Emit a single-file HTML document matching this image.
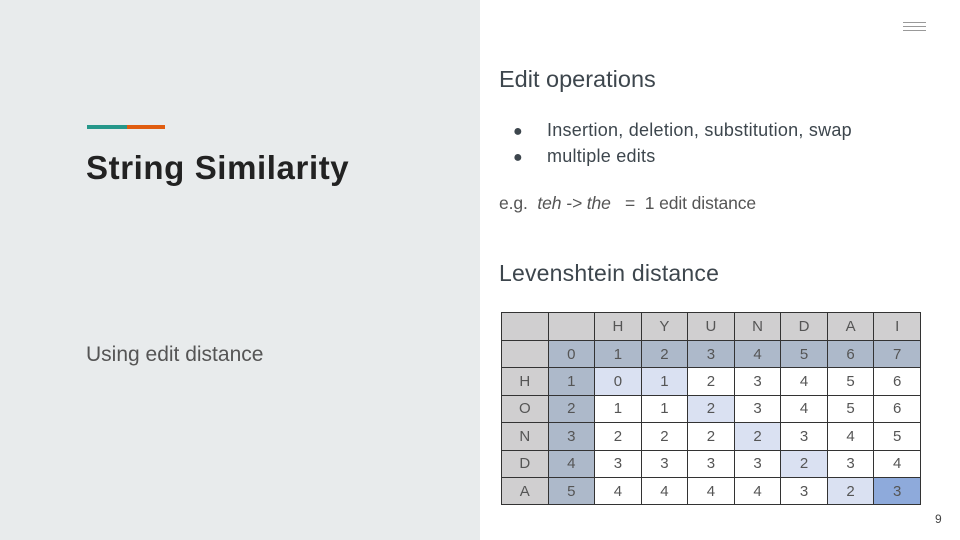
<!DOCTYPE html>
<html><head><meta charset="utf-8"><style>
body{margin:0;width:960px;height:540px;position:relative;overflow:hidden;background:#fff;font-family:"Liberation Sans",sans-serif;}
.l{position:absolute;left:0;top:0;width:480px;height:540px;background:#e8ebec;}
.t{position:absolute;white-space:nowrap;}
table{position:absolute;left:501px;top:312px;border-collapse:collapse;font-size:15px;color:#555;table-layout:fixed;width:420px;}
td{border:1px solid #333;height:26.4px;text-align:center;padding:0;}
.g{background:#d0cfd0}.b{background:#adb9ca}.lb{background:#dae1f2}.d{background:#8eaadb}
</style></head><body>
<div class="l"></div>
<div style="position:absolute;left:87px;top:125px;width:40px;height:4px;background:#25978a"></div>
<div style="position:absolute;left:127px;top:125px;width:38px;height:4px;background:#e05d10"></div>
<div class="t" style="left:86px;top:149px;font-size:33px;font-weight:bold;color:#222;letter-spacing:0.6px">String Similarity</div>
<div class="t" style="left:86px;top:343px;font-size:21px;color:#555;letter-spacing:0px">Using edit distance</div>
<div style="position:absolute;left:903px;top:22px;width:23px;border-top:1px solid #999;height:3px;border-bottom:1px solid #999"></div>
<div style="position:absolute;left:903px;top:30px;width:23px;border-top:1px solid #999"></div>
<div class="t" style="left:499px;top:66px;font-size:23.5px;color:#3d464d;letter-spacing:0px">Edit operations</div>
<div class="t" style="left:513px;top:120px;font-size:18px;color:#3d464d;letter-spacing:0.25px"><span style="font-size:16px">●</span><span style="position:absolute;left:34px">Insertion, deletion, substitution, swap</span></div>
<div class="t" style="left:513px;top:146px;font-size:18px;color:#3d464d;letter-spacing:0.25px"><span style="font-size:16px">●</span><span style="position:absolute;left:34px">multiple edits</span></div>
<div class="t" style="left:499px;top:193px;font-size:17.5px;color:#555;letter-spacing:-0.1px">e.g.&nbsp; <i>teh -&gt; the</i> &nbsp; = &nbsp;1 edit distance</div>
<div class="t" style="left:499px;top:260px;font-size:23px;color:#3d464d;letter-spacing:0.2px">Levenshtein distance</div>
<table>
<tr style="height:28px"><td class="g"></td><td class="g"></td><td class="g">H</td><td class="g">Y</td><td class="g">U</td><td class="g">N</td><td class="g">D</td><td class="g">A</td><td class="g">I</td></tr>
<tr><td class="g"></td><td class="b">0</td><td class="b">1</td><td class="b">2</td><td class="b">3</td><td class="b">4</td><td class="b">5</td><td class="b">6</td><td class="b">7</td></tr>
<tr><td class="g">H</td><td class="b">1</td><td class="lb">0</td><td class="lb">1</td><td>2</td><td>3</td><td>4</td><td>5</td><td>6</td></tr>
<tr><td class="g">O</td><td class="b">2</td><td>1</td><td>1</td><td class="lb">2</td><td>3</td><td>4</td><td>5</td><td>6</td></tr>
<tr><td class="g">N</td><td class="b">3</td><td>2</td><td>2</td><td>2</td><td class="lb">2</td><td>3</td><td>4</td><td>5</td></tr>
<tr><td class="g">D</td><td class="b">4</td><td>3</td><td>3</td><td>3</td><td>3</td><td class="lb">2</td><td>3</td><td>4</td></tr>
<tr><td class="g">A</td><td class="b">5</td><td>4</td><td>4</td><td>4</td><td>4</td><td>3</td><td class="lb">2</td><td class="d">3</td></tr>
</table>
<div class="t" style="left:935px;top:512px;font-size:12px;color:#444">9</div>
</body></html>
